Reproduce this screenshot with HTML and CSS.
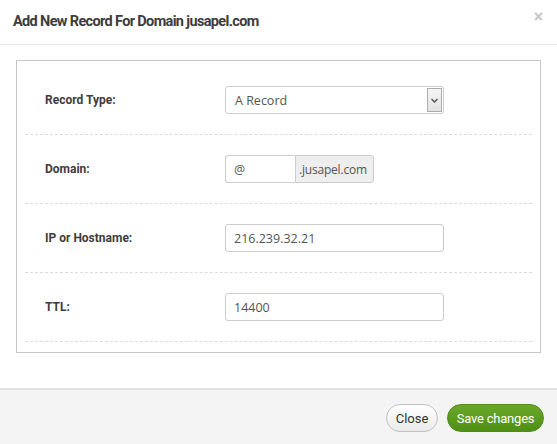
FILE: index.html
```html
<!DOCTYPE html>
<html>
<head>
<meta charset="utf-8">
<link rel="stylesheet" href="styles.css">
</head>
<body>
<div class="modal">
  <div class="modal-header">
    <h4 class="modal-title">Add New Record For Domain jusapel.com</h4>
    <span class="close-x">×</span>
  </div>
  <div class="modal-body">
    <div class="box">
      <div class="row">
        <label class="label">Record Type:</label>
        <div class="select">
          <span class="select-text">A Record</span>
          <span class="select-arrow"><svg width="7" height="5" viewBox="0 0 7 5"><path d="M0.5 1 L3.5 4 L6.5 1" fill="none" stroke="#555" stroke-width="1.5"/></svg></span>
        </div>
      </div>
      <div class="row">
        <label class="label">Domain:</label>
        <div class="input-group">
          <div class="input small">@</div>
          <div class="addon">.jusapel.com</div>
        </div>
      </div>
      <div class="row">
        <label class="label">IP or Hostname:</label>
        <div class="input">216.239.32.21</div>
      </div>
      <div class="row">
        <label class="label">TTL:</label>
        <div class="input">14400</div>
      </div>
    </div>
  </div>
  <div class="modal-footer">
    <button class="btn btn-default">Close</button>
    <button class="btn btn-success">Save changes</button>
  </div>
</div>
</body>
</html>
```
FILE: styles.css
```css
html, body {
  margin: 0;
  padding: 0;
  background: #fff;
}
.modal {
  width: 557px;
  height: 444px;
  display: flex;
  flex-direction: column;
  font-family: "Open Sans", sans-serif;
  color: #555;
}
.modal-header {
  height: 45px;
  box-sizing: border-box;
  border-bottom: 1px solid #e5e5e5;
  display: flex;
  align-items: center;
  justify-content: space-between;
  padding: 0 14px 2px 13px;
}
.modal-title {
  margin: 0;
  font-family: Roboto, "Liberation Sans", sans-serif;
  font-weight: 700;
  font-size: 14.5px;
  color: #3d3d3d;
  letter-spacing: -0.65px;
}
.close-x {
  font-family: "Liberation Sans", sans-serif;
  font-weight: 700;
  font-size: 16px;
  color: #c4c4c4;
  line-height: 1;
  margin-top: -8px;
}
.modal-body {
  padding: 15px 16px 0 16px;
  height: 343px;
  box-sizing: border-box;
}
.box {
  border: 1px solid #c6c6c6;
  padding: 5px 8px 10px 8px;
}
.row {
  display: flex;
  align-items: center;
  padding: 20px 0 20px 20px;
  border-bottom: 1px dashed #dcdcdc;
  height: 28px;
}
.label {
  width: 180px;
  font-family: Roboto, "Liberation Sans", sans-serif;
  font-weight: 700;
  font-size: 12px;
  color: #3d3d3d;
}
.select, .input {
  box-sizing: border-box;
  width: 219px;
  height: 28px;
  border: 1px solid #ccc;
  border-radius: 3px;
  font-size: 12.5px;
  color: #555;
  display: flex;
  align-items: center;
  padding-left: 8px;
  background: #fff;
}
.select {
  padding-left: 9px;
  justify-content: space-between;
  padding-right: 1px;
}
.select-arrow {
  width: 15px;
  height: 24px;
  box-sizing: border-box;
  border: 1px solid #adadad;
  background: linear-gradient(#f5f5f5, #e2e2e2);
  display: flex;
  align-items: center;
  justify-content: center;
}
.input-group {
  display: flex;
}
.input.small {
  width: 70px;
  border-radius: 3px 0 0 3px;
  border-right: none;
}
.addon {
  box-sizing: border-box;
  height: 28px;
  width: 79px;
  border: 1px solid #ccc;
  border-radius: 0 3px 3px 0;
  background: #eee;
  font-size: 12px;
  letter-spacing: -0.2px;
  color: #555;
  display: flex;
  align-items: center;
  padding-left: 3px;
  white-space: nowrap;
}
.modal-footer {
  flex: 1;
  border-top: 2px solid #e2e2e2;
  background: #f4f4f4;
  display: flex;
  justify-content: flex-end;
  align-items: flex-start;
  padding: 14px 13px 0 0;
  gap: 9px;
}
.btn {
  height: 28px;
  border-radius: 14px;
  font-family: Roboto, "Liberation Sans", sans-serif;
  font-size: 13px;
  padding: 0;
  cursor: pointer;
}
.btn-default {
  width: 52px;
  border: 1px solid #c2c2c2;
  background: linear-gradient(#fff, #ebebeb);
  color: #333;
}
.btn-success {
  width: 97px;
  border: 1px solid #4f8c17;
  background: linear-gradient(#6aa82a, #4e8f14);
  color: #fff;
  letter-spacing: -0.2px;
}
```
